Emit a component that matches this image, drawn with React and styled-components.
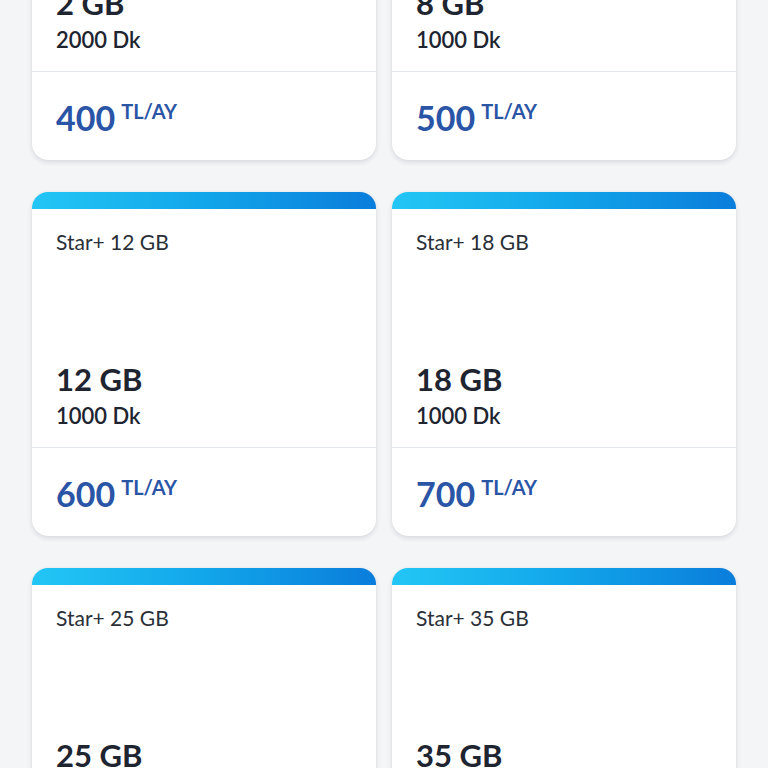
import React from "react";
import styled, { createGlobalStyle } from "styled-components";

const GlobalStyle = createGlobalStyle`
  html, body {
    margin: 0;
    padding: 0;
    background: #f4f5f7;
    font-family: "Lato", "Noto Sans", "Liberation Sans", sans-serif;
    overflow: hidden;
  }
  * { box-sizing: border-box; }
`;

const Page = styled.div`
  width: 768px;
  height: 768px;
  overflow: hidden;
  background: #f4f5f7;
`;

/* the list is scrolled: first row's top lies above the viewport */
const List = styled.div`
  margin-top: -184px;
  padding: 0 32px 32px;
  display: grid;
  grid-template-columns: 1fr 1fr;
  column-gap: 16px;
  row-gap: 32px;
`;

const Card = styled.div`
  background: #ffffff;
  border-radius: 16px;
  overflow: hidden;
  box-shadow: 0 2px 5px rgba(20, 30, 50, 0.13), 0 0 1px rgba(20, 30, 50, 0.1);
  display: flex;
  flex-direction: column;
`;

const TopBar = styled.div`
  height: 17px;
  background: linear-gradient(90deg, #22c6f5 0%, #12a6ea 50%, #0a7ddb 100%);
`;

const Body = styled.div`
  height: 238px;
  padding: 20px 24px 18px;
  display: flex;
  flex-direction: column;
  justify-content: space-between;
`;

const Title = styled.div`
  font-size: 21px;
  line-height: 25px;
  font-weight: 400;
  color: #2a2f38;
`;

const Amount = styled.div`
  display: flex;
  flex-direction: column;
`;

const Data = styled.div`
  font-size: 31px;
  line-height: 36px;
  font-weight: 700;
  color: #1e2530;
`;

const Minutes = styled.div`
  margin-top: 6px;
  font-size: 22px;
  line-height: 26px;
  font-weight: 600;
  color: #1e2530;
`;

const Divider = styled.div`
  height: 1px;
  background: #e3e6ec;
`;

const PriceRow = styled.div`
  height: 88px;
  padding: 26px 24px 0;
  display: flex;
  align-items: flex-start;
  color: #2a55a6;
`;

const Price = styled.span`
  font-size: 34px;
  line-height: 40px;
  font-weight: 700;
`;

const Unit = styled.span`
  margin-left: 6px;
  margin-top: 2px;
  font-size: 20px;
  line-height: 22px;
  font-weight: 700;
`;

const plans = [
  { name: "Star+ 2 GB", data: "2 GB", min: "2000 Dk", price: "400" },
  { name: "Star+ 8 GB", data: "8 GB", min: "1000 Dk", price: "500" },
  { name: "Star+ 12 GB", data: "12 GB", min: "1000 Dk", price: "600" },
  { name: "Star+ 18 GB", data: "18 GB", min: "1000 Dk", price: "700" },
  { name: "Star+ 25 GB", data: "25 GB", min: "1000 Dk", price: "800" },
  { name: "Star+ 35 GB", data: "35 GB", min: "1000 Dk", price: "900" },
];

export default function App() {
  return (
    <Page>
      <GlobalStyle />
      <List>
        {plans.map((p) => (
          <Card key={p.name}>
            <TopBar />
            <Body>
              <Title>{p.name}</Title>
              <Amount>
                <Data>{p.data}</Data>
                <Minutes>{p.min}</Minutes>
              </Amount>
            </Body>
            <Divider />
            <PriceRow>
              <Price>{p.price}</Price>
              <Unit>TL/AY</Unit>
            </PriceRow>
          </Card>
        ))}
      </List>
    </Page>
  );
}
